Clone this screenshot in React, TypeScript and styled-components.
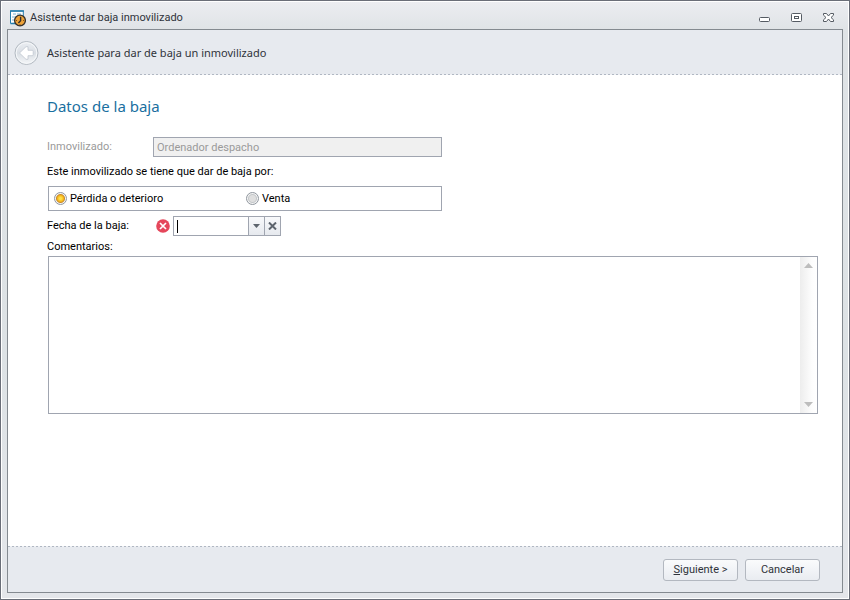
import React, { useState } from "react";
import styled, { createGlobalStyle } from "styled-components";

const GlobalStyle = createGlobalStyle`
  *, *::before, *::after { box-sizing: border-box; }
  body { margin: 0; }
  button, input, textarea { font: inherit; color: inherit; }
`;

const line = "#a0a5b0";
const panel = "#e7eaef";
const dashes = "repeating-linear-gradient(90deg, #b0b7c2 0 2px, #eef0f4 2px 4px)";

const Window = styled.div`
  display: flex;
  flex-direction: column;
  min-height: 100vh;
  padding: 0 5px 5px;
  border: 1px solid #6a6e78;
  box-shadow: inset 0 0 0 1px #fff;
  background: linear-gradient(#ecedf1, #dfe3e6 30px, #dde2e5 60%, #e4e6ea);
  font: 11px/16px Roboto, "Liberation Sans", sans-serif;
  color: #000;
`;

const TitleBar = styled.header`
  display: flex;
  align-items: center;
  height: 28px;
  padding: 6px 6px 0 4px;
  gap: 4px;
  color: #2f333a;
`;

const WindowTitle = styled.h1`
  flex: 1;
  margin: 0;
  font-size: 11px;
  font-weight: 400;
`;

const WindowControls = styled.div`
  display: flex;
  gap: 14px;
`;

const ControlButton = styled.button`
  display: grid;
  place-items: center;
  width: 18px;
  height: 16px;
  padding: 0;
  border: 0;
  background: none;
`;

const Frame = styled.main`
  display: flex;
  flex: 1;
  flex-direction: column;
  margin: 0 1px 1px;
  border: 1px solid #848a90;
  background: #fff;
`;

const WizardHeader = styled.div`
  display: flex;
  align-items: center;
  gap: 8px;
  height: 45px;
  padding: 0 6px;
  background: ${dashes} left bottom / 100% 1px no-repeat ${panel};
  color: #2f333a;
  font: 11px/16px "Noto Sans", "Open Sans", sans-serif;
`;

const BackButton = styled.button`
  display: block;
  width: 25px;
  height: 26px;
  padding: 0;
  border: 0;
  background: none;
`;

const Content = styled.form`
  flex: 1;
  padding: 21px 24px 24px 39px;
`;

const Heading = styled.h2`
  margin: 0 0 21px;
  font: 400 15px/20px "Noto Sans", "Open Sans", sans-serif;
  color: #1a6f9f;
`;

const FieldRow = styled.div`
  display: grid;
  grid-template-columns: 106px 289px;
  align-items: center;
  height: 20px;
`;

const Label = styled.label<{ $muted?: boolean }>`
  color: ${(p) => (p.$muted ? "#9a9a9a" : "#000")};
`;

const DisabledInput = styled.input`
  width: 100%;
  height: 20px;
  padding: 0 3px;
  border: 1px solid ${line};
  border-radius: 0;
  background: #f0f0f0;
  color: #9a9a9a;
`;

const ReasonGroup = styled.fieldset`
  min-width: 0;
  margin: 7px 0 5px;
  padding: 0;
  border: 0;
`;

const Legend = styled.legend`
  margin: 0 0 6px;
  padding: 0;
`;

const ReasonBox = styled.div`
  display: grid;
  grid-template-columns: 192px 1fr;
  align-items: center;
  width: 394px;
  max-width: 100%;
  height: 25px;
  margin-left: 1px;
  padding-left: 5px;
  border: 1px solid ${line};
`;

const RadioLabel = styled.label`
  display: flex;
  align-items: center;
  gap: 3px;
`;

const Radio = styled.input`
  appearance: none;
  width: 13px;
  height: 13px;
  margin: 0;
  border: 1px solid #8f969e;
  border-radius: 50%;
  background: radial-gradient(circle, #dfdfdf 0 3px, #c4c7ca 4px, #f4f4f4 5px);

  &:checked {
    background: radial-gradient(circle, #ffdf4a 0 1px, #f5b81c 3px, #c98a2a 4px, #f4f4f4 5px);
  }
`;

const DateCell = styled.div`
  display: flex;
  align-items: center;
  gap: 3px;
  margin-left: 3px;
`;

const DateBox = styled.div`
  display: flex;
  align-items: center;
  width: 108px;
  height: 20px;
  border: 1px solid ${line};
  background: #fff;
`;

const Caret = styled.span`
  flex: none;
  width: 1px;
  height: 13px;
  margin-left: 3px;
  background: #000;
`;

const DateInput = styled.input`
  flex: 1;
  min-width: 0;
  height: 18px;
  padding: 0;
  border: 0;
  outline: 0;
  background: none;
`;

const DateButton = styled.button`
  display: grid;
  place-items: center;
  width: 16px;
  height: 18px;
  padding: 0;
  border: 0;
  border-left: 1px solid ${line};
  background: linear-gradient(#f8f9fb, #e6e9ee);
`;

const CommentsLabel = styled.label`
  display: block;
  margin: 3px 0 1px;
`;

const CommentsBox = styled.div`
  display: flex;
  height: 158px;
  margin-left: 1px;
  border: 1px solid ${line};
`;

const Comments = styled.textarea`
  flex: 1;
  min-width: 0;
  padding: 3px;
  border: 0;
  outline: 0;
  resize: none;
`;

const ScrollBar = styled.div`
  display: flex;
  flex-direction: column;
  justify-content: space-between;
  align-items: center;
  width: 17px;
  padding: 6px 0;
  background: linear-gradient(90deg, #ededed, #fdfdfd 70%, #fff);
`;

const Footer = styled.footer`
  display: flex;
  justify-content: flex-end;
  gap: 7px;
  padding: 13px 22px 11px;
  background: ${dashes} left top / 100% 1px no-repeat ${panel};
`;

const FooterButton = styled.button`
  width: 75px;
  height: 22px;
  padding: 0;
  border: 1px solid #b3b8c0;
  border-radius: 3px;
  background: linear-gradient(#fafbfc, #e9ecf1);
  color: #2f333a;
`;

const AppIcon = () => (
  <svg width="16" height="17" viewBox="0 0 16 17" aria-hidden="true">
    <path d="M.5 13.5V1h12.8v8" fill="#fff" stroke="#267fae" />
    <path d="M0 1h14M.5 13.5h6" stroke="#267fae" strokeWidth="1.4" />
    <path d="M3 4h3M7 4h4M2 7h4M2 10h3" stroke="#79b4d2" />
    <circle cx="10" cy="10.5" r="5.4" fill="#eda33a" stroke="#33302c" strokeWidth="1.3" />
    <path d="M10.6 6.8v4L8.4 13" fill="none" stroke="#33302c" strokeWidth="1.4" />
    <path d="M6 10.5h1M13 10.5h1M10 14v1" stroke="#805318" />
  </svg>
);

const BackIcon = () => (
  <svg width="25" height="26" viewBox="0 0 25 26" aria-hidden="true">
    <defs>
      <linearGradient id="disc" x1="0" y1="0" x2="0" y2="1">
        <stop stopColor="#eceff3" />
        <stop offset=".5" stopColor="#d9dee4" />
        <stop offset="1" stopColor="#f5f7f9" />
      </linearGradient>
    </defs>
    <circle cx="12.5" cy="13" r="11.5" fill="url(#disc)" stroke="#b3bac2" />
    <circle cx="12.5" cy="13" r="10.3" fill="none" stroke="#f6f8fa" />
    <path d="M5.5 13l6.5-6.3h2v3.6h4.2q1 0 1 1v3.4q0 1-1 1H14v3.6h-2z" fill="#fff" stroke="#c0c7d0" strokeWidth=".8" />
  </svg>
);

const MinimizeIcon = () => (
  <svg width="12" height="10" viewBox="0 0 12 10" aria-hidden="true">
    <rect x=".5" y="4.5" width="10" height="4" rx="1" fill="#fff" stroke="#555b63" />
  </svg>
);

const MaximizeIcon = () => (
  <svg width="12" height="10" viewBox="0 0 12 10" aria-hidden="true">
    <rect x=".5" y=".5" width="10" height="8" rx="1" fill="#fff" stroke="#555b63" />
    <rect x="3.5" y="3.5" width="4" height="2" fill="#fff" stroke="#555b63" />
  </svg>
);

const CloseIcon = () => (
  <svg width="12" height="10" viewBox="0 0 12 10" aria-hidden="true">
    <path
      d="M.5.5h3L5.5 3 7.5.5h3v1.7L8 4.5l2.5 2.3v1.7h-3L5.5 6 3.5 8.5h-3V6.8L3 4.5.5 2.2z"
      fill="#fff"
      stroke="#555b63"
    />
  </svg>
);

const ErrorIcon = () => (
  <svg width="14" height="14" viewBox="0 0 14 14" role="img" aria-label="Error">
    <circle cx="7" cy="7" r="6.8" fill="#e5475b" />
    <path d="M4 4l6 6M10 4l-6 6" stroke="#fff" strokeWidth="1.7" />
  </svg>
);

const DownIcon = () => (
  <svg width="7" height="4" viewBox="0 0 7 4" aria-hidden="true">
    <path d="M0 0h7L3.5 4z" fill="#5d646d" />
  </svg>
);

const ClearIcon = () => (
  <svg width="9" height="8" viewBox="0 0 9 8" aria-hidden="true">
    <path d="M1 .5l7 7M8 .5l-7 7" stroke="#5d646d" strokeWidth="2" />
  </svg>
);

const ScrollArrow = ({ down }: { down?: boolean }) => (
  <svg width="9" height="5" viewBox="0 0 9 5" aria-hidden="true">
    <path d={down ? "M0 0h9L4.5 5z" : "M0 5h9L4.5 0z"} fill="#bdbdbd" />
  </svg>
);

export default function App() {
  const [reason, setReason] = useState("perdida");
  const [date, setDate] = useState("");

  return (
    <>
      <GlobalStyle />
      <Window>
        <TitleBar>
          <AppIcon />
          <WindowTitle>Asistente dar baja inmovilizado</WindowTitle>
          <WindowControls>
            <ControlButton aria-label="Minimizar"><MinimizeIcon /></ControlButton>
            <ControlButton aria-label="Maximizar"><MaximizeIcon /></ControlButton>
            <ControlButton aria-label="Cerrar"><CloseIcon /></ControlButton>
          </WindowControls>
        </TitleBar>
        <Frame>
          <WizardHeader>
            <BackButton aria-label="Atrás" disabled><BackIcon /></BackButton>
            <span>Asistente para dar de baja un inmovilizado</span>
          </WizardHeader>
          <Content id="baja" onSubmit={(e) => e.preventDefault()}>
            <Heading>Datos de la baja</Heading>
            <FieldRow>
              <Label htmlFor="inmovilizado" $muted>Inmovilizado:</Label>
              <DisabledInput id="inmovilizado" value="Ordenador despacho" disabled readOnly />
            </FieldRow>
            <ReasonGroup>
              <Legend>Este inmovilizado se tiene que dar de baja por:</Legend>
              <ReasonBox>
                <RadioLabel>
                  <Radio type="radio" name="motivo" checked={reason === "perdida"} onChange={() => setReason("perdida")} />
                  Pérdida o deterioro
                </RadioLabel>
                <RadioLabel>
                  <Radio type="radio" name="motivo" checked={reason === "venta"} onChange={() => setReason("venta")} />
                  Venta
                </RadioLabel>
              </ReasonBox>
            </ReasonGroup>
            <FieldRow>
              <Label htmlFor="fecha">Fecha de la baja:</Label>
              <DateCell>
                <ErrorIcon />
                <DateBox>
                  <Caret />
                  <DateInput id="fecha" value={date} onChange={(e) => setDate(e.target.value)} />
                  <DateButton type="button" aria-label="Abrir calendario"><DownIcon /></DateButton>
                  <DateButton type="button" aria-label="Borrar fecha" onClick={() => setDate("")}><ClearIcon /></DateButton>
                </DateBox>
              </DateCell>
            </FieldRow>
            <CommentsLabel htmlFor="comentarios">Comentarios:</CommentsLabel>
            <CommentsBox>
              <Comments id="comentarios" />
              <ScrollBar>
                <ScrollArrow />
                <ScrollArrow down />
              </ScrollBar>
            </CommentsBox>
          </Content>
          <Footer>
            <FooterButton type="submit" form="baja"><u>S</u>iguiente &gt;</FooterButton>
            <FooterButton type="button">Cancelar</FooterButton>
          </Footer>
        </Frame>
      </Window>
    </>
  );
}
